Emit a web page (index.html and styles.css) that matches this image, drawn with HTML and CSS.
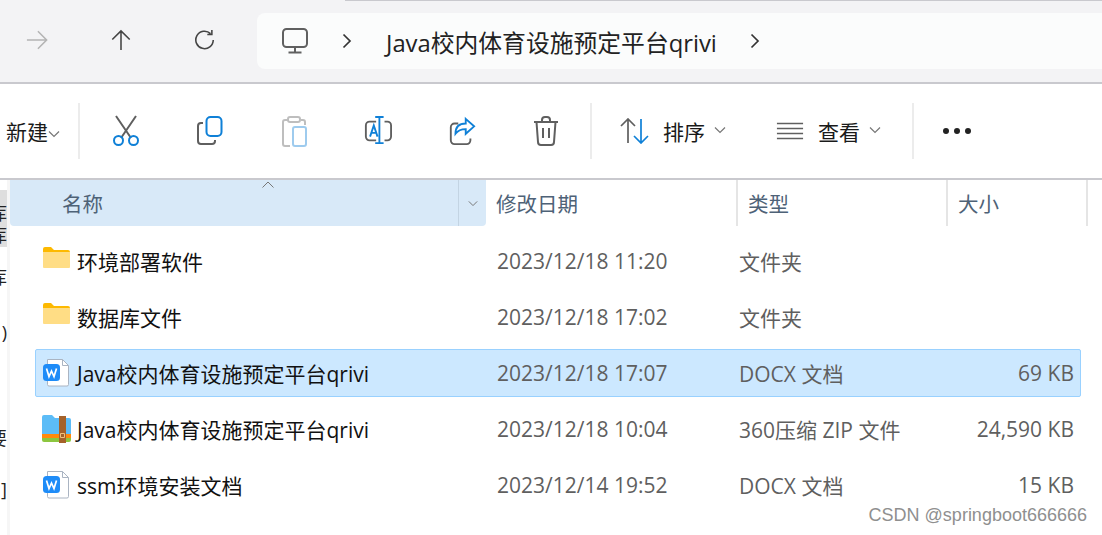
FILE: index.html
```html
<!DOCTYPE html>
<html lang="zh-CN">
<head>
<meta charset="utf-8">
<title>Java校内体育设施预定平台qrivi</title>
<link rel="stylesheet" href="styles.css">
</head>
<body>
<div class="window">
  <header class="navbar">
    <div class="nav-buttons">
      <svg class="nav-icon disabled" viewBox="0 0 24 24"><path d="M1 12H22M13 2.5 22.5 12 13 21.5"/></svg>
      <svg class="nav-icon" viewBox="0 0 24 24"><path d="M12 23V2M2.500 11.500 12 2l9.500 9.500"/></svg>
      <svg class="nav-icon" viewBox="0 0 24 24"><path d="M21 12a9.500 9.500 0 1 1-3-7M19.500 1v5h-5"/></svg>
    </div>
    <div class="address">
      <svg class="pc-icon" viewBox="0 0 26 26"><rect x="1" y="1" width="24" height="18" rx="3.500"/><path d="M13 19v5M6.500 24.500h13"/></svg>
      <svg class="crumb" viewBox="0 0 10 16"><path d="M1.500 1.500 8 8l-6.500 6.500"/></svg>
      <span class="path">Java校内体育设施预定平台qrivi</span>
      <svg class="crumb last" viewBox="0 0 10 16"><path d="M1.500 1.500 8 8l-6.500 6.500"/></svg>
    </div>
  </header>

  <div class="toolbar">
    <div class="tool-new"><span class="new-label">新建</span><svg class="caret" viewBox="0 0 12 8"><path d="M1 1.500 6 6.500l5-5"/></svg></div>
    <i class="sep"></i>
    <div class="tool-group">
      <svg class="tool" viewBox="0 0 28 32"><path class="gray" d="M4 1 19 23M24 1 9 23"/><circle class="blue" cx="6.500" cy="25.500" r="4.500"/><circle class="blue" cx="21.500" cy="25.500" r="4.500"/></svg>
      <svg class="tool" viewBox="0 0 28 32"><path class="gray" d="M7 8H5a3 3 0 0 0-3 3v15a3 3 0 0 0 3 3h11a3 3 0 0 0 3-3v-1"/><rect class="blue" x="10.500" y="2" width="15" height="19" rx="4"/></svg>
      <svg class="tool faded" viewBox="0 0 28 32"><path class="gray" d="M9 5H5a2 2 0 0 0-2 2v22a2 2 0 0 0 2 2h5M21 5h2a2 2 0 0 1 2 2v3"/><rect class="gray" x="8" y="2" width="12" height="5" rx="2"/><rect class="blue" x="13" y="12" width="13" height="19" rx="2"/></svg>
      <svg class="tool" viewBox="0 0 30 32"><path class="gray" d="M13 6H6a4 4 0 0 0-4 4v12a4 4 0 0 0 4 4h7M22 6h3a4 4 0 0 1 4 4v12a4 4 0 0 1-4 4h-3"/><path class="blue" d="M12 1h9M16.500 1v28M12 29h9M6.500 22l4-12 4 12M8 18h5.500"/></svg>
      <svg class="tool" viewBox="0 0 30 32"><path class="gray" d="M11 8H7a4 4 0 0 0-4 4v14a4 4 0 0 0 4 4h13a4 4 0 0 0 4-4v-2"/><path class="blue" d="M19 3l9 8-9 8v-5c-5 0-8 1-11 5 0-7 4-11 11-11z"/></svg>
      <svg class="tool" viewBox="0 0 28 32"><path class="gray" d="M2 7h24M10 7V5a3 3 0 0 1 3-3h2a3 3 0 0 1 3 3v2M4.500 7l1.500 20a3 3 0 0 0 3 3h10a3 3 0 0 0 3-3L23.500 7M11 13v10M17 13v10"/></svg>
    </div>
    <i class="sep"></i>
    <div class="tool-menu sort">
      <svg class="menu-icon" viewBox="0 0 30 26"><path class="gray" d="M8 25V1M1 8l7-7 7 7"/><path class="blue" d="M21 1v24M14 18l7 7 7-7"/></svg>
      <span>排序</span><svg class="caret" viewBox="0 0 12 8"><path d="M1 1.500 6 6.500l5-5"/></svg>
    </div>
    <div class="tool-menu view">
      <svg class="menu-icon" viewBox="0 0 30 20"><path class="gray" d="M1 2h28M1 7.300h28M1 12.600h28M1 18h28"/></svg>
      <span>查看</span><svg class="caret" viewBox="0 0 12 8"><path d="M1 1.500 6 6.500l5-5"/></svg>
    </div>
    <i class="sep"></i>
    <div class="more"><b></b><b></b><b></b></div>
  </div>

  <main class="main">
    <aside class="sidebar">
      <div class="side-selected"><span class="frag">库</span><span class="frag">库</span></div>
      <span class="frag frag-a">库</span>
      <span class="frag frag-b">(</span>
      <span class="frag frag-c">要</span>
      <span class="frag frag-d">[</span>
    </aside>
    <section class="content">
      <div class="columns">
        <div class="col col-name">名称<svg class="sort-up" viewBox="0 0 12 7"><path d="M.5 6.500 6 1l5.500 5.500"/></svg><span class="col-drop"><svg class="caret small" viewBox="0 0 12 8"><path d="M1 1.500 6 6.500l5-5"/></svg></span></div>
        <div class="col col-date">修改日期</div>
        <div class="col col-type">类型</div>
        <div class="col col-size">大小</div>
      </div>
      <div class="rows">
        <div class="row">
          <span class="name"><svg class="file" viewBox="0 0 30 30"><path class="folder-back" d="M1 3a2 2 0 0 1 2-2h6l3 3h14a2 2 0 0 1 2 2v4H1z"/><path class="folder-front" d="M1 6h27v15a1 1 0 0 1-1 1H2a1 1 0 0 1-1-1z"/></svg>环境部署软件</span>
          <span class="date">2023/12/18 11:20</span><span class="type">文件夹</span><span class="size"></span>
        </div>
        <div class="row">
          <span class="name"><svg class="file" viewBox="0 0 30 30"><path class="folder-back" d="M1 3a2 2 0 0 1 2-2h6l3 3h14a2 2 0 0 1 2 2v4H1z"/><path class="folder-front" d="M1 6h27v15a1 1 0 0 1-1 1H2a1 1 0 0 1-1-1z"/></svg>数据库文件</span>
          <span class="date">2023/12/18 17:02</span><span class="type">文件夹</span><span class="size"></span>
        </div>
        <div class="row selected">
          <span class="name"><svg class="file" viewBox="0 0 30 30"><path class="doc" d="M5.500 1.500h15l6 6v19a1.500 1.500 0 0 1-1.500 1.500H7a1.500 1.500 0 0 1-1.500-1.500z"/><path class="doc-fold" d="M20.500 1.500v6h6"/><rect class="wps" x="1" y="6" width="17" height="17" rx="3.500"/><path class="wps-w" d="M4.500 10.500 7 18.500l2.500-5.500 2.500 5.500 2.500-8"/></svg>Java校内体育设施预定平台qrivi</span>
          <span class="date">2023/12/18 17:07</span><span class="type">DOCX 文档</span><span class="size">69 KB</span>
        </div>
        <div class="row">
          <span class="name"><svg class="file" viewBox="0 0 30 30"><path fill="#5cbcf7" d="M0 3a2 2 0 0 1 2-2h8l3 3h14a2 2 0 0 1 2 2v16H0z"/><path fill="#ff8a0c" d="M0 20h29v4H0z"/><path fill="#8cc63f" d="M0 24h29v2a2 2 0 0 1-2 2H2a2 2 0 0 1-2-2z"/><path fill="#a5622a" d="M17 2h7v27h-7z"/><path fill="none" stroke="#f2c27a" d="M18.500 19.500h4v4h-4z"/></svg>Java校内体育设施预定平台qrivi</span>
          <span class="date">2023/12/18 10:04</span><span class="type">360压缩 ZIP 文件</span><span class="size">24,590 KB</span>
        </div>
        <div class="row">
          <span class="name"><svg class="file" viewBox="0 0 30 30"><path class="doc" d="M5.500 1.500h15l6 6v19a1.500 1.500 0 0 1-1.500 1.500H7a1.500 1.500 0 0 1-1.500-1.500z"/><path class="doc-fold" d="M20.500 1.500v6h6"/><rect class="wps" x="1" y="6" width="17" height="17" rx="3.500"/><path class="wps-w" d="M4.500 10.500 7 18.500l2.500-5.500 2.500 5.500 2.500-8"/></svg>ssm环境安装文档</span>
          <span class="date">2023/12/14 19:52</span><span class="type">DOCX 文档</span><span class="size">15 KB</span>
        </div>
      </div>
    </section>
  </main>
  <div class="watermark">CSDN @springboot666666</div>
</div>
</body>
</html>
```

FILE: styles.css
```css
* { box-sizing: border-box; }
html, body { margin: 0; padding: 0; }
body {
  width: 1102px;
  height: 535px;
  overflow: hidden;
  background: #fff;
  color: #1a1a1a;
  font-family: "Open Sans", "Noto Sans CJK SC", sans-serif;
  font-size: 21px;
}
.window { position: relative; width: 1102px; height: 535px; overflow: hidden; display: flex; flex-direction: column; }

svg { display: block; flex: none; fill: none; }

/* address row */
.navbar {
  height: 84px;
  background: #f3f3f5;
  border-bottom: 2px solid #c9c9ce;
  display: flex;
  padding: 13px 0 0 26px;
  position: relative;
}
.navbar::before {
  content: "";
  position: absolute;
  top: 0; left: 345px; right: 0;
  height: 1px;
  background: #c9c9ce;
}
.nav-buttons { display: flex; gap: 62px; width: 231px; padding-top: 16px; align-items: flex-start; }
.nav-icon { width: 22px; height: 22px; margin-top: 0; stroke: #444; stroke-width: 1.700; }
.nav-icon.disabled { stroke: #b4b4b4; }
.address {
  width: 845px;
  height: 56px;
  background: #fbfcfc;
  border-radius: 8px 0 0 8px;
  display: flex;
  align-items: center;
  padding-left: 25px;
}
.pc-icon { width: 26px; height: 26px; stroke: #606060; stroke-width: 2; }
.crumb { width: 10px; height: 16px; stroke: #333; stroke-width: 1.700; margin-left: 34px; }
.crumb.last { margin-left: 33px; }
.path { margin-left: 34px; font-size: 23.800px; color: #222; white-space: nowrap; }

/* command bar */
.toolbar {
  height: 96px;
  border-bottom: 2px solid #c9c9ce;
  display: flex;
  align-items: center;
  padding-bottom: 1px;
  flex: none;
}
.sep { width: 2px; height: 56px; background: #ececec; flex: none; }
.tool-new { width: 78px; display: flex; align-items: center; overflow: hidden; justify-content: flex-end; padding-right: 30px; gap: 11px; position: relative; }
.new-label { white-space: nowrap; flex: none; }
.tool-new .caret { position: absolute; right: 18px; top: 14px; }
.caret { width: 12px; height: 8px; stroke: #777; stroke-width: 1.200; }
.tool-group { display: flex; width: 510px; padding-left: 32px; gap: 56px; align-items: center; }
.tool { width: 28px; height: 32px; stroke-width: 2; }
.tool.faded { opacity: .4; }
.gray { stroke: #5f5f5f; }
.blue { stroke: #0f80d7; }
.tool-menu { display: flex; align-items: center; }
.tool-menu .caret { margin-left: 9px; margin-top: -1px; }
.menu-icon { stroke-width: 1.700; }
.sort { padding-left: 28px; width: 184px; }
.sort .menu-icon { width: 30px; height: 26px; margin-right: 13px; }
.view { width: 136px; }
.view .menu-icon { width: 28px; height: 20px; margin-right: 14px; stroke-width: 1.500; }
.more { display: flex; gap: 5px; margin-left: 29px; }
.more b { width: 6px; height: 6px; border-radius: 50%; background: #222; }

/* main */
.main { display: flex; flex: 1; min-height: 0; }
.sidebar { width: 10px; border-right: 3px solid #f6f6f6; display: flex; flex-direction: column; overflow: hidden; font-size: 18px; color: #222; }
.frag { display: block; width: 7px; height: 22px; line-height: 22px; overflow: hidden; direction: rtl; white-space: nowrap; flex: none; }
.side-selected { margin-top: 10px; height: 57px; width: 10px; background: #dedede; padding-top: 12px; margin-right: -3px; }
.frag-a { margin-top: 19px; }
.frag-b { margin-top: 33px; }
.frag-c { margin-top: 84px; }
.frag-d { margin-top: 29px; }
.content { flex: 1; min-width: 0; }
.columns {
  height: 46px;
  display: grid;
  grid-template-columns: 476px 252px 210px 140px;
  font-size: 20.500px;
  color: #4e6277;
}
.col { display: flex; align-items: center; padding-left: 10px; border-right: 2px solid #e5e5e5; position: relative; }
.col-name { background: #d8e9f8; border-right: none; border-radius: 0 0 4px 4px; padding-left: 52px; }
.col-size { padding-left: 10px; }
.sort-up { position: absolute; left: 252px; top: 1px; width: 12px; height: 7px; stroke: #777; stroke-width: 1; }
.col-drop { position: absolute; right: 0; top: 0; bottom: 0; width: 28px; border-left: 1px solid #c3d4e3; display: flex; align-items: center; justify-content: center; }
.caret.small { width: 10px; height: 7px; }

.rows { padding: 11px 0 0 25px; display: flex; flex-direction: column; gap: 8px; }
.row {
  width: 1046px;
  height: 48px;
  display: grid;
  grid-template-columns: 451px 252px 211px 1fr;
  align-items: center;
  border: 1px solid transparent;
  border-radius: 2px;
  color: #5f5f5f;
  white-space: nowrap;
}
.row.selected { background: #cce8ff; border-color: #99d1ff; }
.name { display: flex; align-items: center; color: #111; padding-left: 6px; }
.file { width: 30px; height: 30px; margin-right: 5px; }
.date { padding-left: 10px; }
.type { padding-left: 0; }
.size { text-align: right; padding-right: 6px; }
.folder-back { fill: #fdb900; }
.folder-front { fill: #ffdd85; }
.doc { fill: #fff; stroke: #aab4c2; stroke-width: 1; }
.doc-fold { stroke: #aab4c2; stroke-width: 1; }
.wps { fill: #1e8cf8; }
.wps-w { stroke: #fff; stroke-width: 1.700; }

.watermark {
  position: absolute;
  right: 15px;
  top: 504px;
  font-family: "Liberation Sans", sans-serif;
  font-size: 18px;
  line-height: 22px;
  color: #8f8f8f;
  background: rgba(255,255,255,.85);
  white-space: nowrap;
}
```
